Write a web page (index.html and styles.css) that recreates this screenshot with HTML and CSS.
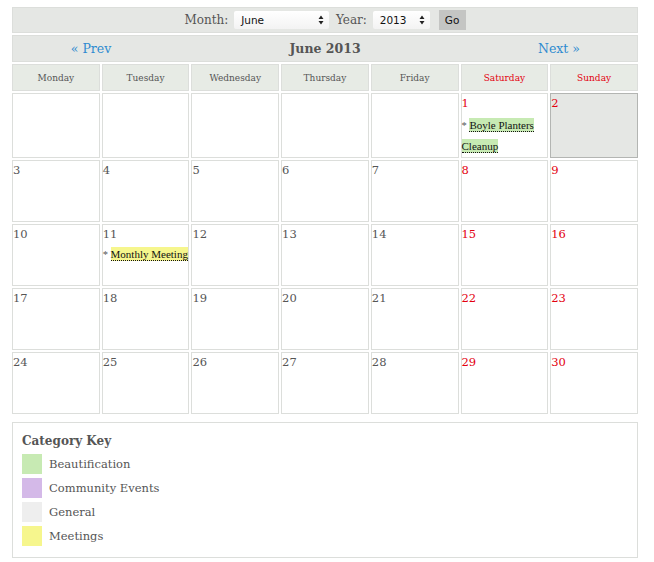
FILE: index.html
```html
<!DOCTYPE html>
<html>
<head>
<meta charset="utf-8">
<link rel="stylesheet" href="styles.css">
</head>
<body>
<div class="wrap">
<table class="cal">
  <tr>
    <td colspan="7" class="bar picker">
      <span class="lbl">Month:</span>
      <span class="sel sel-month">June<svg class="arr" width="6" height="10" viewBox="0 0 6 10"><path d="M3 0.5L5.5 4H0.5Z M3 9.5L0.5 6H5.5Z" fill="#222"/></svg></span>
      <span class="lbl">Year:</span>
      <span class="sel sel-year">2013<svg class="arr" width="6" height="10" viewBox="0 0 6 10"><path d="M3 0.5L5.5 4H0.5Z M3 9.5L0.5 6H5.5Z" fill="#222"/></svg></span>
      <span class="go">Go</span>
    </td>
  </tr>
  <tr>
    <td colspan="7" class="bar nav">
      <div class="navrow">
        <a class="nav-side" href="#">« Prev</a>
        <span class="nav-title">June 2013</span>
        <a class="nav-side" href="#">Next »</a>
      </div>
    </td>
  </tr>
  <tr class="heads">
    <th>Monday</th><th>Tuesday</th><th>Wednesday</th><th>Thursday</th><th>Friday</th><th class="we">Saturday</th><th class="we">Sunday</th>
  </tr>
  <tr class="week first">
    <td></td><td></td><td></td><td></td><td></td>
    <td class="we"><div class="num">1</div><div class="ev">* <a href="#" class="tag green">Boyle Planters Cleanup</a></div></td>
    <td class="we today"><div class="num">2</div></td>
  </tr>
  <tr class="week">
    <td><div class="num">3</div></td><td><div class="num">4</div></td><td><div class="num">5</div></td><td><div class="num">6</div></td><td><div class="num">7</div></td><td class="we"><div class="num">8</div></td><td class="we"><div class="num">9</div></td>
  </tr>
  <tr class="week">
    <td><div class="num">10</div></td>
    <td><div class="num">11</div><div class="ev ev-single">* <a href="#" class="tag yellow">Monthly Meeting</a></div></td>
    <td><div class="num">12</div></td><td><div class="num">13</div></td><td><div class="num">14</div></td><td class="we"><div class="num">15</div></td><td class="we"><div class="num">16</div></td>
  </tr>
  <tr class="week">
    <td><div class="num">17</div></td><td><div class="num">18</div></td><td><div class="num">19</div></td><td><div class="num">20</div></td><td><div class="num">21</div></td><td class="we"><div class="num">22</div></td><td class="we"><div class="num">23</div></td>
  </tr>
  <tr class="week">
    <td><div class="num">24</div></td><td><div class="num">25</div></td><td><div class="num">26</div></td><td><div class="num">27</div></td><td><div class="num">28</div></td><td class="we"><div class="num">29</div></td><td class="we"><div class="num">30</div></td>
  </tr>
</table>
<div class="key">
  <div class="key-title">Category Key</div>
  <div class="key-item"><span class="sw green"></span>Beautification</div>
  <div class="key-item"><span class="sw purple"></span>Community Events</div>
  <div class="key-item"><span class="sw grey"></span>General</div>
  <div class="key-item"><span class="sw yellow"></span>Meetings</div>
</div>
</div>
</body>
</html>
```

FILE: styles.css
```css
html, body {
  margin: 0;
  padding: 0;
  background: #fff;
}
body {
  font-family: "DejaVu Serif", Georgia, serif;
  color: #555;
}
.wrap {
  padding: 5px 0 0 10px;
  width: 630px;
}
.cal {
  width: 630px;
  table-layout: fixed;
  border-collapse: separate;
  border-spacing: 2px;
}
.cal td, .cal th {
  border: 1px solid #dcdedb;
  padding: 0;
}
.bar {
  background: #e5e7e4;
  text-align: center;
}
.picker {
  height: 24px;
  font-size: 12px;
}
.picker .lbl {
  vertical-align: middle;
  color: #555;
}
.sel {
  display: inline-flex;
  align-items: center;
  justify-content: space-between;
  box-sizing: border-box;
  height: 18px;
  background: linear-gradient(#fff, #f3f3f3);
  font-family: "DejaVu Sans", sans-serif;
  font-size: 10.5px;
  color: #111;
  padding: 0 5px 0 7px;
  vertical-align: middle;
  text-align: left;
  border-radius: 2px;
}
.sel-month { width: 95px; margin: 0 3px 0 2px; }
.sel-year { width: 57px; margin: 0 3px 0 2px; }
.go {
  display: inline-flex;
  align-items: center;
  justify-content: center;
  box-sizing: border-box;
  width: 27px;
  height: 20px;
  background: #c4c5c3;
  font-family: "DejaVu Sans", sans-serif;
  font-size: 10.5px;
  color: #111;
  vertical-align: middle;
  margin-left: 2px;
}
.nav {
  height: 25px;
}
.navrow {
  display: flex;
  align-items: center;
}
.nav-side {
  flex: 1;
  text-align: center;
  color: #2e8bd0;
  text-decoration: none;
  font-size: 12.5px;
}
.nav-title {
  flex: 2;
  text-align: center;
  font-weight: bold;
  font-size: 12.5px;
  color: #555;
}
.heads th {
  background: #e7ebe5;
  font-weight: normal;
  font-size: 9px;
  height: 25px;
  color: #555;
}
.heads th.we { color: #e3000f; }
.week td {
  height: 60px;
  vertical-align: top;
  background: #fff;
}
.week.first td { height: 63px; }
.week td.today {
  background: #e5e7e4;
  border-color: #b3b5b2;
}
.num {
  font-size: 11.5px;
  line-height: 13px;
  padding: 3px 0 0 0;
  color: #555;
}
.we .num { color: #e3000f; }
.ev {
  font-family: "Liberation Serif", "Times New Roman", serif;
  font-size: 10.5px;
  line-height: 21px;
  color: #555;
  margin-top: 5px;
}
.ev-single { margin-top: 3px; }
.tag {
  color: #111;
  text-decoration: none;
  border-bottom: 1px dotted #111;
  padding: 1px 0 0;
  font-size: 11px;
}
.tag.green, .sw.green { background: #c7eab3; }
.tag.yellow, .sw.yellow { background: #f6f68d; }
.sw.purple { background: #d4b9e8; }
.sw.grey { background: #eeeeee; }
.key {
  margin: 6px 0 0 2px;
  width: 626px;
  box-sizing: border-box;
  border: 1px solid #dcdedb;
  padding: 10px 9px 8px;
  height: 136px;
}
.key-title {
  font-weight: bold;
  font-size: 12px;
  line-height: 16px;
  margin-bottom: 5px;
}
.key-item {
  display: flex;
  align-items: center;
  gap: 7px;
  height: 20px;
  margin-bottom: 4px;
  font-size: 11.5px;
  color: #555;
}
.sw {
  width: 20px;
  height: 20px;
  display: inline-block;
}
```
